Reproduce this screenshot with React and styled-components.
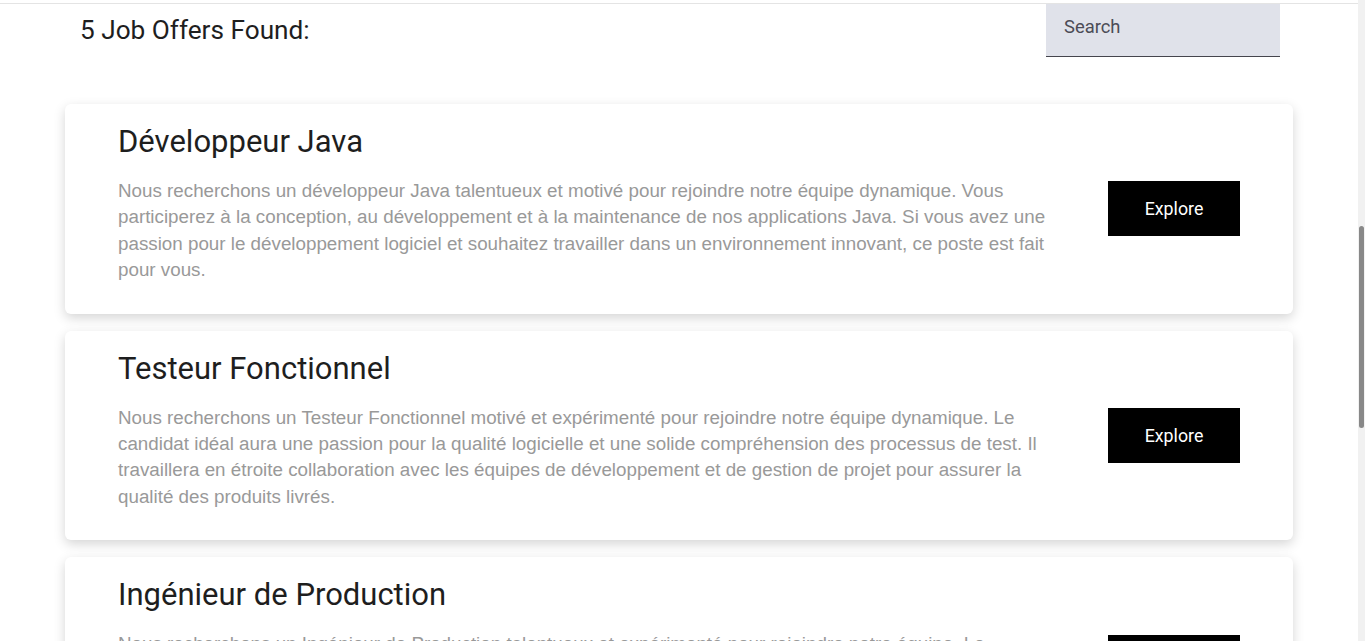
import React from "react";
import styled, { createGlobalStyle } from "styled-components";

const GlobalStyle = createGlobalStyle`
  html, body {
    margin: 0;
    padding: 0;
    background: #ffffff;
  }
  body {
    font-family: Roboto, "Liberation Sans", Arial, sans-serif;
  }
`;

const jobs = [
  {
    title: "Développeur Java",
    text: "Nous recherchons un développeur Java talentueux et motivé pour rejoindre notre équipe dynamique. Vous participerez à la conception, au développement et à la maintenance de nos applications Java. Si vous avez une passion pour le développement logiciel et souhaitez travailler dans un environnement innovant, ce poste est fait pour vous.",
  },
  {
    title: "Testeur Fonctionnel",
    text: "Nous recherchons un Testeur Fonctionnel motivé et expérimenté pour rejoindre notre équipe dynamique. Le candidat idéal aura une passion pour la qualité logicielle et une solide compréhension des processus de test. Il travaillera en étroite collaboration avec les équipes de développement et de gestion de projet pour assurer la qualité des produits livrés.",
  },
  {
    title: "Ingénieur de Production",
    text: "Nous recherchons un Ingénieur de Production talentueux et expérimenté pour rejoindre notre équipe. Le candidat idéal sera responsable du bon fonctionnement de nos environnements de production, de la supervision des applications et de la résolution des incidents. Il travaillera en lien étroit avec les équipes de développement et d'exploitation pour garantir la stabilité des services.",
  },
  {
    title: "Chef de Projet",
    text: "Nous recherchons un Chef de Projet rigoureux et organisé pour piloter nos projets informatiques. Vous serez chargé de la planification, du suivi des délais et des budgets, ainsi que de la coordination entre les équipes métier et techniques.",
  },
  {
    title: "Administrateur Systèmes",
    text: "Nous recherchons un Administrateur Systèmes pour assurer la gestion et la sécurité de notre infrastructure. Vous interviendrez sur l'installation, la configuration et la maintenance des serveurs et des réseaux de l'entreprise.",
  },
];

const App = () => {
  return (
    <>
      <GlobalStyle />
      <Page>
        <Header>
          <Count>{jobs.length} Job Offers Found:</Count>
          <SearchField placeholder="Search" />
        </Header>
        <List>
          {jobs.map((job) => (
            <Card key={job.title}>
              <Body>
                <Title>{job.title}</Title>
                <Description>{job.text}</Description>
              </Body>
              <ExploreButton>Explore</ExploreButton>
            </Card>
          ))}
        </List>
      </Page>
      {/* fake window scrollbar, the headless browser hides the real one */}
      <ScrollTrack>
        <ScrollThumb />
      </ScrollTrack>
    </>
  );
};

export default App;

const Page = styled.div`
  margin-top: 3px;
  margin-right: 7px;
  border-top: 1px solid #e4e4e4;
  padding-bottom: 40px;
`;

const Header = styled.div`
  display: flex;
  align-items: center;
  justify-content: space-between;
  padding: 0 78px 0 80px;
  height: 53px;
`;

const Count = styled.h2`
  margin: 0 0 1px;
  font-family: Roboto, sans-serif;
  font-weight: 400;
  font-size: 26.2px;
  color: #1e1e1e;
`;

const SearchField = styled.input`
  width: 234px;
  height: 53px;
  box-sizing: border-box;
  border: none;
  border-bottom: 1px solid #45454d;
  background: #e0e2ea;
  padding: 0 18px 8px;
  font-family: Roboto, sans-serif;
  font-size: 18.4px;
  color: #333;
  outline: none;
  &::placeholder {
    color: #4c4c56;
  }
`;

const List = styled.div`
  display: flex;
  flex-direction: column;
  gap: 17px;
  margin: 47px 65px 0;
`;

const Card = styled.div`
  display: flex;
  align-items: center;
  gap: 55px;
  background: #ffffff;
  border-radius: 6px;
  box-shadow: 0 4px 12px rgba(0, 0, 0, 0.17);
  padding: 19px 53px 30px;
`;

const Body = styled.div`
  flex: 1;
  min-width: 0;
`;

const Title = styled.h3`
  margin: 0 0 18px;
  font-family: Roboto, sans-serif;
  font-weight: 400;
  font-size: 31px;
  color: #1e1e1e;
`;

const Description = styled.p`
  margin: 0;
  font-family: "Liberation Sans", Arial, sans-serif;
  font-size: 18.8px;
  line-height: 26.4px;
  color: #999999;
`;

const ExploreButton = styled.button`
  flex: none;
  width: 132px;
  height: 55px;
  margin-top: 11px;
  border: none;
  background: #000000;
  color: #ffffff;
  font-family: Roboto, sans-serif;
  font-weight: 400;
  font-size: 17.8px;
  cursor: pointer;
`;

const ScrollTrack = styled.div`
  position: fixed;
  top: 0;
  right: 0;
  bottom: 0;
  width: 7px;
  background: #f1f1f1;
`;

const ScrollThumb = styled.div`
  margin: 226px 1px 0 1px;
  height: 202px;
  border-radius: 3px;
  background: #888888;
`;
